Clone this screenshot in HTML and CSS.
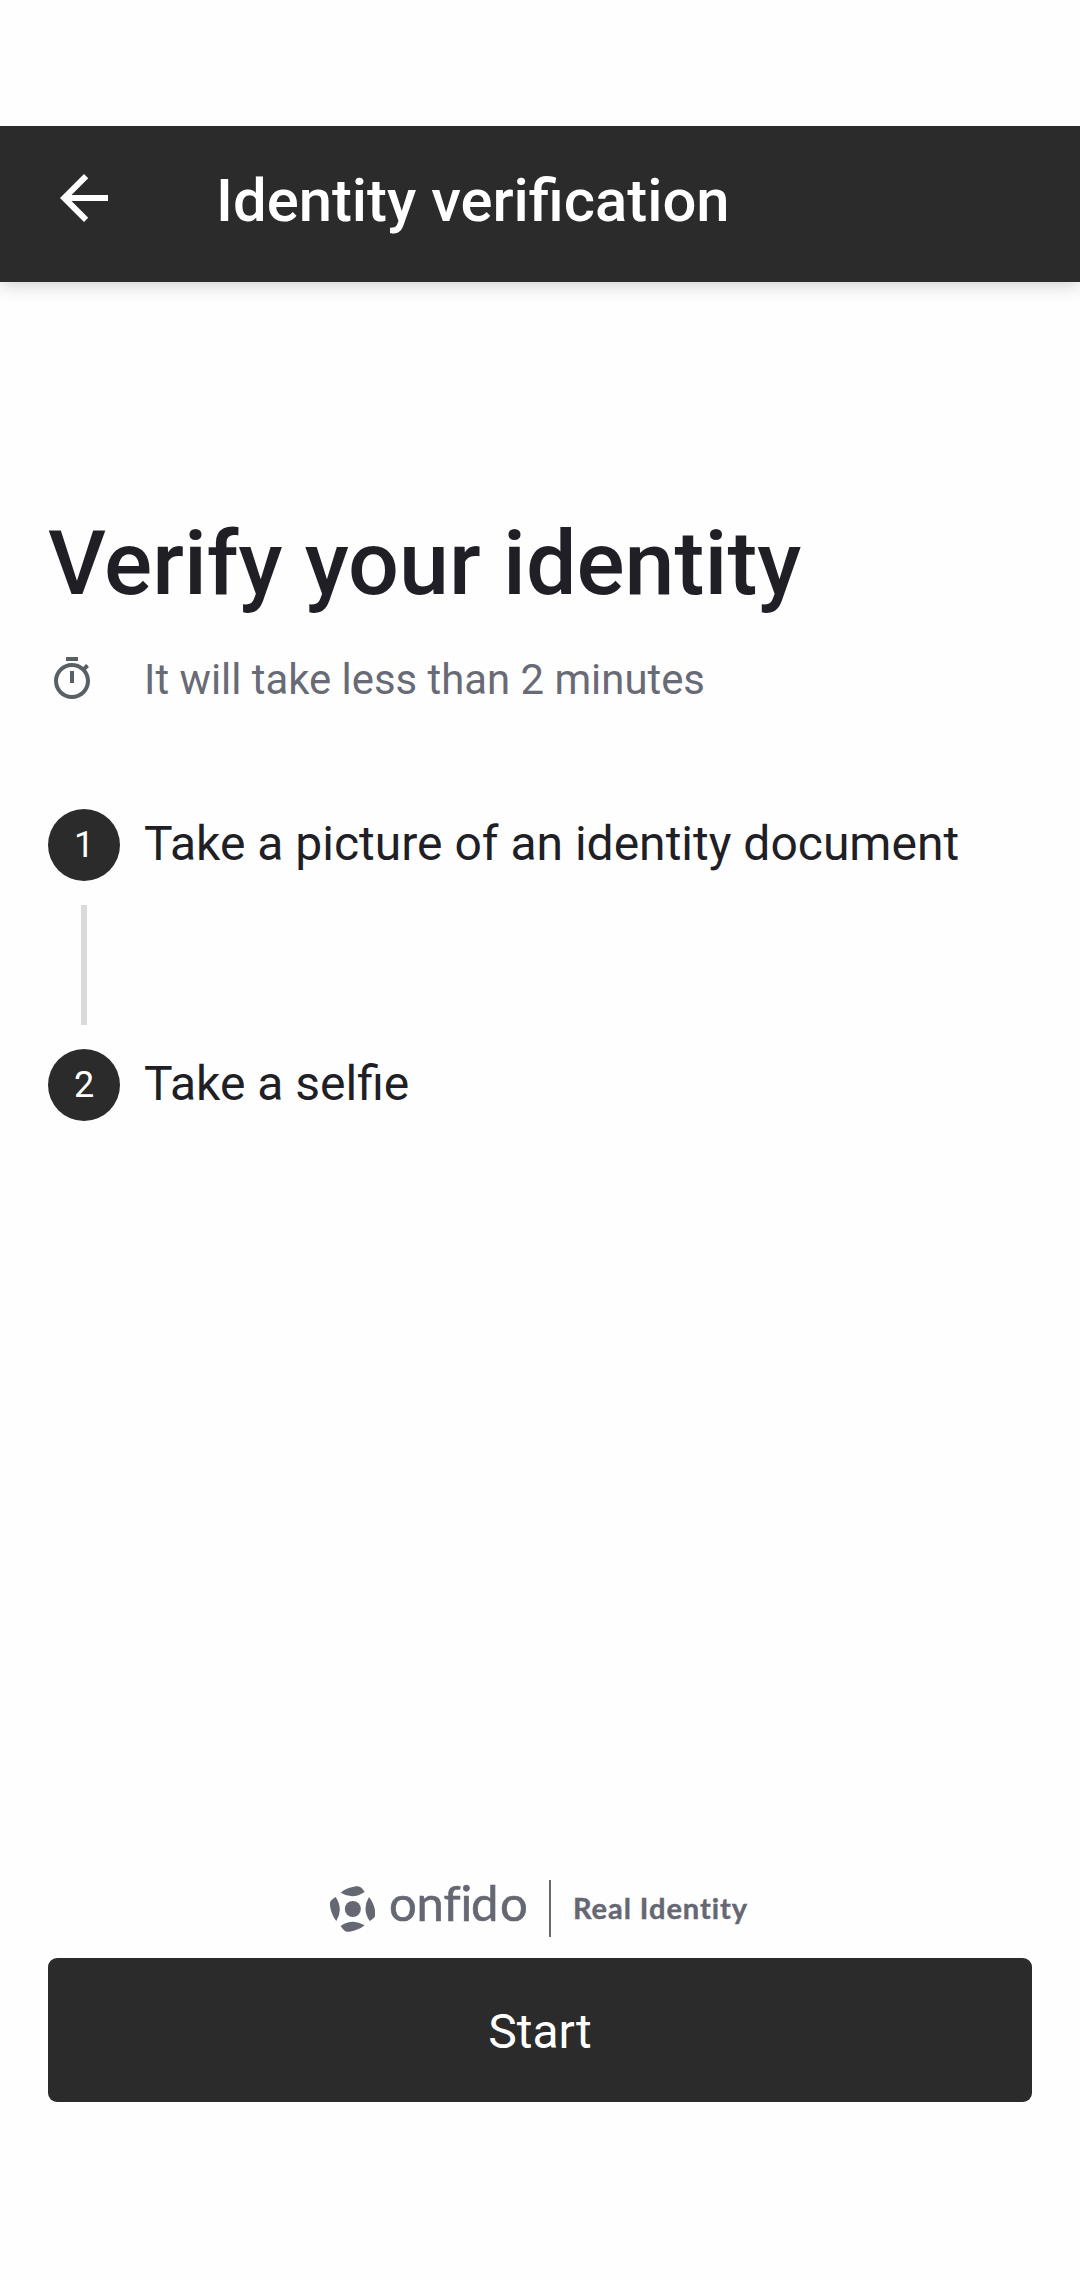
FILE: index.html
```html
<!DOCTYPE html>
<html lang="en">
<head>
<meta charset="utf-8">
<title>Identity verification</title>
<link rel="stylesheet" href="styles.css">
</head>
<body>
<div class="screen">
  <header class="app-bar">
    <svg class="back" viewBox="0 0 24 24" aria-label="Back"><path d="M20 11H7.83l5.59-5.59L12 4l-8 8 8 8 1.41-1.41L7.83 13H20v-2z"/></svg>
    <span class="app-title">Identity verification</span>
  </header>
  <main class="content">
    <h1 class="heading">Verify your identity</h1>
    <div class="duration">
      <svg class="timer" viewBox="0 0 24 24"><path d="M15 1H9v2h6V1zm-4 13h2V8h-2v6zm8.03-6.61 1.42-1.42c-.43-.51-.9-.99-1.41-1.41l-1.42 1.42C16.07 4.74 14.12 4 12 4c-4.97 0-9 4.03-9 9s4.02 9 9 9 9-4.03 9-9c0-2.12-.74-4.07-1.97-5.61zM12 20c-3.87 0-7-3.13-7-7s3.13-7 7-7 7 3.13 7 7-3.13 7-7 7z"/></svg>
      <span>It will take less than 2 minutes</span>
    </div>
    <div class="steps">
      <div class="step"><span class="number">1</span><span class="label">Take a picture of an identity document</span></div>
      <div class="connector"></div>
      <div class="step"><span class="number">2</span><span class="label">Take a selfie</span></div>
    </div>
  </main>
  <footer class="footer">
    <div class="brand">
      <svg class="mark" viewBox="30 47 135 138">
        <defs><path id="petal" d="M62 67 Q80 52 108 48 Q118 46 124 52 Q130 58 134 65 Q98 89 62 67Z"/></defs>
        <circle cx="98.500" cy="116" r="24"/>
        <use href="#petal"/>
        <use href="#petal" transform="rotate(90 98 116)"/>
        <use href="#petal" transform="rotate(180 98 116)"/>
        <use href="#petal" transform="rotate(270 98 116)"/>
      </svg>
      <svg class="wordmark" viewBox="0 0 142 57"><text x="-2 25.500 52.500 69.500 80 109" y="41">onfido</text></svg>
      <span class="divider"></span>
      <svg class="tagline" viewBox="0 0 180 57"><text x="-2" y="39" textLength="174">Real Identity</text></svg>
    </div>
    <button class="start" type="button">Start</button>
  </footer>
</div>
</body>
</html>
```
FILE: styles.css
```css
* { box-sizing: border-box; }
body {
  margin: 0;
  background: #fefefe;
  font-family: Roboto, "Liberation Sans", sans-serif;
  font-variant-ligatures: common-ligatures;
}
.screen {
  display: flex;
  flex-direction: column;
  width: 1080px;
  height: 2280px;
  padding: 126px 0 178px;
}
.app-bar {
  display: flex;
  flex: none;
  align-items: center;
  gap: 96px;
  height: 156px;
  padding: 0 48px 12px;
  background: #2b2b2b;
  color: #fff;
  box-shadow: 0 4px 16px rgba(0, 0, 0, .17);
  clip-path: inset(0 0 -30px 0);
}
.back { width: 72px; height: 72px; fill: #fff; }
.app-title {
  padding-top: 5px;
  font-size: 59.800px;
  font-weight: 500;
  line-height: 70px;
}
.content { flex: 1; padding: 229px 48px 0; }
.heading {
  margin: 0;
  color: #201f26;
  font-size: 89.800px;
  font-weight: 500;
  line-height: 106px;
}
.duration {
  display: flex;
  gap: 48px;
  margin-top: 38px;
  color: #686a75;
  font-size: 41.850px;
  line-height: 50px;
}
.timer { width: 48px; height: 48px; fill: #596064; }
.steps { margin-top: 104px; }
.step { display: flex; align-items: center; gap: 24px; height: 72px; }
.number {
  width: 72px;
  height: 72px;
  border-radius: 50%;
  background: #2b2b2b;
  color: #fff;
  font-size: 36px;
  line-height: 72px;
  text-align: center;
}
.label {
  padding-bottom: 3px;
  color: #201f26;
  font-size: 48px;
  line-height: 56px;
}
.connector {
  width: 6px;
  height: 120px;
  margin: 24px 33px;
  background: #d9dadb;
}
.footer { padding: 0 48px; }
.brand {
  display: flex;
  align-items: center;
  height: 57px;
  margin-bottom: 21px;
  padding-left: 282px;
  fill: #656772;
}
.mark { width: 45px; height: 46px; }
.wordmark {
  width: 142px;
  height: 57px;
  margin-left: 16px;
  font-family: Lato, sans-serif;
  font-size: 49px;
  font-variant-ligatures: none;
  stroke: #656772;
  stroke-width: .6px;
  overflow: visible;
}
.divider { width: 2px; height: 57px; margin-left: 16px; background: #656772; }
.tagline {
  width: 180px;
  height: 57px;
  margin-left: 24px;
  font-family: Lato, sans-serif;
  font-size: 29px;
  font-weight: 700;
  font-variant-ligatures: none;
  stroke: #656772;
  stroke-width: .4px;
  overflow: visible;
}
.start {
  display: block;
  width: 984px;
  height: 144px;
  padding: 3px 0 0;
  border: 0;
  border-radius: 9px;
  background: #2b2b2b;
  color: #fff;
  font: 400 48px/56px Roboto, "Liberation Sans", sans-serif;
}
```
